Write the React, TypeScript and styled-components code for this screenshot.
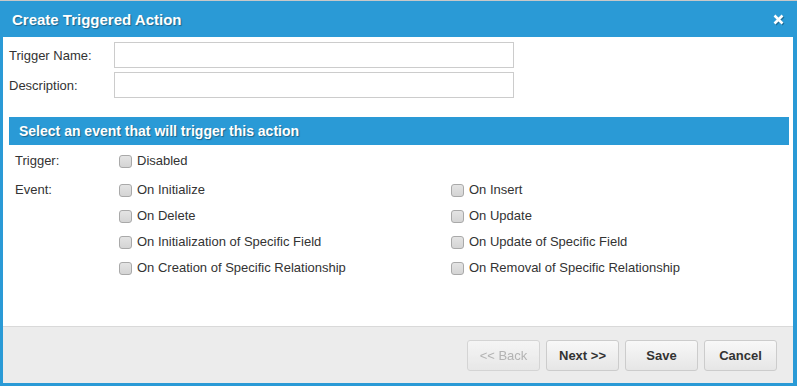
import React from "react";
import styled, { createGlobalStyle } from "styled-components";

const GlobalStyle = createGlobalStyle`
  html, body {
    margin: 0;
    padding: 0;
    background: #ffffff;
  }
  body {
    font-family: "Liberation Sans", Arial, sans-serif;
    font-size: 13px;
    color: #333333;
  }
  * {
    box-sizing: border-box;
  }
`;

const Page = styled.div`
  border-top: 1px solid #c8c8c8;
`;

const Dialog = styled.div`
  width: 797px;
  height: 385px;
  display: flex;
  flex-direction: column;
  background: #2a9ad6;
  padding: 0 4px 3px 3px;
`;

const Header = styled.div`
  height: 36px;
  display: flex;
  align-items: center;
  justify-content: space-between;
  padding: 0 8px 0 9px;
  color: #ffffff;
`;

const Title = styled.h1`
  margin: 0;
  font-size: 15px;
  font-weight: bold;
  text-shadow: 1px 1px 1px rgba(0, 0, 0, 0.35);
`;

const CloseButton = styled.button`
  border: none;
  background: none;
  padding: 0;
  width: 14px;
  height: 14px;
  cursor: pointer;
  display: flex;
  align-items: center;
  justify-content: center;
  filter: drop-shadow(1px 1px 0 rgba(0, 0, 0, 0.3));
`;

const Body = styled.div`
  flex: 1;
  background: #ffffff;
  padding: 5px 4px 0 6px;
  display: flex;
  flex-direction: column;
`;

const FieldRow = styled.div`
  display: flex;
  align-items: center;
  height: 26px;
  margin-bottom: 4px;
`;

const FieldLabel = styled.label`
  width: 105px;
  flex-shrink: 0;
`;

const TextInput = styled.input`
  width: 400px;
  height: 26px;
  border: 1px solid #cccccc;
  padding: 2px 6px;
  font-family: inherit;
  font-size: 13px;
  outline: none;
`;

const SectionBar = styled.div`
  margin-top: 15px;
  height: 28px;
  background: #2a9ad6;
  color: #ffffff;
  font-weight: bold;
  font-size: 14px;
  display: flex;
  align-items: center;
  padding-left: 10px;
  text-shadow: 1px 1px 1px rgba(0, 0, 0, 0.35);
`;

const OptionGrid = styled.div<{ $offset?: number }>`
  display: grid;
  grid-template-columns: 104px 332px 1fr;
  grid-auto-rows: 26px;
  padding: ${(p) => p.$offset ?? 0}px 0 0 6px;
  align-items: center;
`;

const RowLabel = styled.span`
  align-self: center;
`;

const Check = styled.label`
  display: flex;
  align-items: center;
  gap: 5px;
  cursor: pointer;
`;

const Box = styled.input`
  appearance: none;
  margin: 0;
  width: 13px;
  height: 13px;
  border: 1px solid #a9a9a9;
  border-radius: 3px;
  background: linear-gradient(#e4e4e4, #d4d4d4);
  position: relative;
  top: 1px;
`;

const Footer = styled.div`
  height: 57px;
  margin: auto -4px 0 -6px;
  background: #ececec;
  border-top: 1px solid #d9d9d9;
  display: flex;
  align-items: center;
  justify-content: flex-end;
  gap: 6px;
  padding-right: 16px;
`;

const Button = styled.button<{ $disabled?: boolean }>`
  width: 73px;
  height: 31px;
  border: 1px solid #cccccc;
  border-radius: 3px;
  background: linear-gradient(#f8f8f8, #e6e6e6);
  font-family: inherit;
  font-size: 13px;
  font-weight: ${(p) => (p.$disabled ? "normal" : "bold")};
  color: ${(p) => (p.$disabled ? "#a0a0a0" : "#333333")};
  opacity: ${(p) => (p.$disabled ? 0.75 : 1)};
  cursor: ${(p) => (p.$disabled ? "default" : "pointer")};
`;

const events: [string, string][] = [
  ["On Initialize", "On Insert"],
  ["On Delete", "On Update"],
  ["On Initialization of Specific Field", "On Update of Specific Field"],
  ["On Creation of Specific Relationship", "On Removal of Specific Relationship"],
];

const Option: React.FC<{ label: string }> = ({ label }) => (
  <Check>
    <Box type="checkbox" />
    {label}
  </Check>
);

const App: React.FC = () => {
  return (
    <Page>
      <GlobalStyle />
      <Dialog>
        <Header>
          <Title>Create Triggered Action</Title>
          <CloseButton aria-label="Close">
            <svg width="11" height="11" viewBox="0 0 11 11">
              <path d="M1.5 1.5 L9.5 9.5 M9.5 1.5 L1.5 9.5" stroke="#fff" strokeWidth="2.6" />
            </svg>
          </CloseButton>
        </Header>
        <Body>
          <FieldRow>
            <FieldLabel>Trigger Name:</FieldLabel>
            <TextInput />
          </FieldRow>
          <FieldRow>
            <FieldLabel>Description:</FieldLabel>
            <TextInput />
          </FieldRow>
          <SectionBar>Select an event that will trigger this action</SectionBar>
          <OptionGrid $offset={2}>
            <RowLabel>Trigger:</RowLabel>
            <Option label="Disabled" />
          </OptionGrid>
          <OptionGrid $offset={3}>
            {events.map(([left, right], i) => (
              <React.Fragment key={left}>
                <RowLabel>{i === 0 ? "Event:" : ""}</RowLabel>
                <Option label={left} />
                <Option label={right} />
              </React.Fragment>
            ))}
          </OptionGrid>
          <Footer>
            <Button $disabled>&lt;&lt; Back</Button>
            <Button>Next &gt;&gt;</Button>
            <Button>Save</Button>
            <Button>Cancel</Button>
          </Footer>
        </Body>
      </Dialog>
    </Page>
  );
};

export default App;
